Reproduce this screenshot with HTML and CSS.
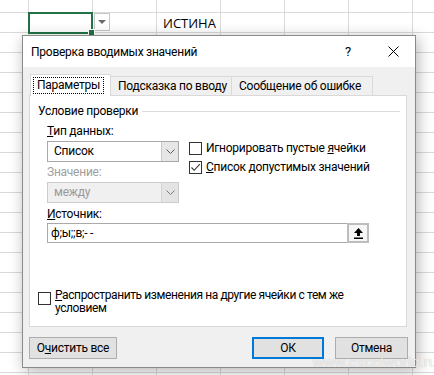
FILE: index.html
```html
<!DOCTYPE html>
<html lang="ru">
<head>
  <meta charset="UTF-8">
  <meta name="viewport" content="width=device-width, initial-scale=1.0">
  <title>Проверка вводимых значений</title>
  <link rel="stylesheet" href="styles.css">
</head>
<body>
  <div class="sheet">
    <div class="sheet-row">
      <div class="cell-active"><span class="fill-handle"></span></div>
      <div class="cell-dropdown"><span class="tri"></span></div>
      <div class="cell-value">ИСТИНА</div>
    </div>
  </div>

  <div class="dialog">
    <div class="titlebar">
      <div class="title">Проверка вводимых значений</div>
      <div class="title-btn help">?</div>
      <div class="title-btn close">
        <svg width="11" height="11" viewBox="0 0 11 11"><path d="M0.5 0.5 L10.5 10.5 M10.5 0.5 L0.5 10.5" stroke="#000" stroke-width="1"/></svg>
      </div>
    </div>

    <div class="dialog-body">
      <div class="tabs">
        <div class="tab active"><span class="focus">Параметры</span></div>
        <div class="tab tab-1">Подсказка по вводу</div>
        <div class="tab tab-2">Сообщение об ошибке</div>
      </div>

      <div class="pane">
        <div class="group-title"><span>Условие проверки</span></div>

        <div class="cond">
          <div class="col-left">
            <div class="label"><u>Т</u>ип данных:</div>
            <div class="select">
              <div class="select-value">Список</div>
              <div class="select-arrow">
                <svg width="9" height="5" viewBox="0 0 9 5"><path d="M0.5 0.5 L4.5 4.5 L8.5 0.5" fill="none" stroke="#5a5a5a"/></svg>
              </div>
            </div>
            <div class="label disabled">Значение:</div>
            <div class="select is-disabled">
              <div class="select-value">между</div>
              <div class="select-arrow">
                <svg width="9" height="5" viewBox="0 0 9 5"><path d="M0.5 0.5 L4.5 4.5 L8.5 0.5" fill="none" stroke="#7a7a7a"/></svg>
              </div>
            </div>
          </div>
          <div class="col-right">
            <div class="check-row">
              <span class="checkbox"></span>
              <span class="check-label">Игнорировать пустые <u>я</u>чейки</span>
            </div>
            <div class="check-row">
              <span class="checkbox">
                <svg width="11" height="11" viewBox="0 0 11 11"><path d="M1.5 5.5 L4.2 8.3 L9.8 2.2" fill="none" stroke="#333" stroke-width="1.1"/></svg>
              </span>
              <span class="check-label"><u>С</u>писок допустимых значений</span>
            </div>
          </div>
        </div>

        <div class="source">
          <div class="label"><u>И</u>сточник:</div>
          <div class="source-input">
            <div class="source-value">ф;ы;;в;- -</div>
            <div class="source-btn">
              <svg width="9" height="11" viewBox="0 0 9 11"><path d="M4.5 0 L9 5 H6 V8 H3 V5 H0 Z" fill="#000"/><rect x="0" y="9.5" width="9" height="1.5" fill="#000"/></svg>
            </div>
          </div>
        </div>

        <div class="spread">
          <span class="checkbox"></span>
          <div class="check-label spread-label">
            <div><u>Р</u>аспространить изменения на другие ячейки с тем же</div>
            <div>условием</div>
          </div>
        </div>
      </div>

      <div class="footer">
        <button class="btn">О<u>ч</u>истить все</button>
        <button class="btn btn-ok">ОК</button>
        <button class="btn btn-cancel">Отмена</button>
      </div>
    </div>
  </div>

  <div class="watermark">www.excelworld.ru</div>
</body>
</html>
```

FILE: styles.css
```css
body {
  margin: 0;
  width: 434px;
  height: 375px;
  overflow: hidden;
  position: relative;
  font-family: Roboto, "Noto Sans", sans-serif;
  font-size: 12px;
  letter-spacing: -0.25px;
  color: #000;
  background-color: #fff;
}

/* лист Excel */
.sheet {
  height: 375px;
  background-image:
    linear-gradient(to right, #dadada 1px, transparent 1px),
    linear-gradient(to bottom, #dadada 1px, transparent 1px);
  background-size: 64px 20px;
  background-position: 28px 12px;
}

.sheet-row {
  display: flex;
  padding-top: 12px;
  height: 21px;
}

.cell-active {
  position: relative;
  margin-left: 28px;
  width: 65px;
  height: 22px;
  box-sizing: border-box;
  border: 2px solid #217346;
  background-color: #fff;
}

.fill-handle {
  position: absolute;
  right: -4px;
  bottom: -4px;
  width: 5px;
  height: 5px;
  background-color: #217346;
  border: 1px solid #fff;
}

.cell-dropdown {
  margin: 1px 0 0 1px;
  width: 16px;
  height: 18px;
  box-sizing: border-box;
  border: 1px solid #c6c6c6;
  background-color: #fff;
  display: flex;
  justify-content: center;
  align-items: center;
}

.tri {
  width: 0;
  height: 0;
  border-left: 4px solid transparent;
  border-right: 4px solid transparent;
  border-top: 4px solid #6a6a6a;
}

.cell-value {
  margin-left: 53px;
  font-family: "Open Sans", sans-serif;
  font-size: 13px;
  letter-spacing: 0;
  line-height: 22px;
}

/* диалог */
.dialog {
  position: absolute;
  left: 22px;
  top: 35px;
  width: 394px;
  height: 333px;
  box-sizing: border-box;
  border: 1px solid #8a8a8a;
  background-color: #f0f0f0;
  box-shadow: 2px 3px 14px rgba(0, 0, 0, 0.3);
}

.titlebar {
  height: 31px;
  background-color: #fff;
  display: flex;
  align-items: center;
}

.title {
  flex: 1;
  padding-left: 8px;
  line-height: 16px;
}

.title-btn {
  height: 31px;
  display: flex;
  align-items: center;
  justify-content: center;
}

.help {
  width: 44px;
  font-size: 13px;
}

.close {
  width: 45px;
  padding-left: 2px;
  box-sizing: border-box;
}

.dialog-body {
  padding: 7px 7px 0 6px;
}

.tabs {
  display: flex;
  align-items: flex-end;
  height: 21px;
  padding-left: 1px;
}

.tab {
  box-sizing: border-box;
  border: 1px solid #d9d9d9;
  border-bottom: none;
  line-height: 16px;
  white-space: nowrap;
}

.tab.active {
  position: relative;
  z-index: 1;
  width: 81px;
  height: 22px;
  margin-bottom: -1px;
  padding: 2px 0 0 3px;
  background-color: #fff;
}

.focus {
  display: inline-block;
  padding: 0 3px;
  line-height: 15px;
  outline: 1px dotted #000;
}

.tab-1,
.tab-2 {
  height: 19px;
  padding: 1px 0 0 7px;
  border-left: none;
  background-color: #f0f0f0;
}

.tab-1 {
  width: 121px;
}

.tab-2 {
  width: 141px;
}

.pane {
  width: 378px;
  height: 232px;
  box-sizing: border-box;
  border: 1px solid #d9d9d9;
  background-color: #fff;
}

.group-title {
  display: flex;
  align-items: center;
  margin: 7px 6px 0 8px;
  line-height: 16px;
}

.group-title::after {
  content: "";
  flex: 1;
  height: 1px;
  margin: 1px 0 0 4px;
  background-color: #dcdcdc;
}

.cond {
  display: flex;
  margin: 4px 0 0 17px;
}

.col-left {
  width: 132px;
}

.label {
  line-height: 16px;
}

.label.disabled {
  color: #a0a0a0;
  margin-top: 2px;
}

.select {
  display: flex;
  height: 21px;
  margin-top: 2px;
  box-sizing: border-box;
  border: 1px solid #a9a9a9;
  background-color: #fff;
}

.select-value {
  flex: 1;
  padding-left: 6px;
  line-height: 19px;
}

.select-arrow {
  width: 16px;
  border-left: 1px solid #c8c8c8;
  background-color: #e6e6e6;
  display: flex;
  justify-content: center;
  align-items: center;
}

.select.is-disabled {
  border-color: #cccccc;
  background-color: #f0f0f0;
  color: #9a9a9a;
}

.select.is-disabled .select-arrow {
  border-left-color: #d4d4d4;
  background-color: #e4e4e4;
}

.col-right {
  margin: 18px 0 0 10px;
}

.check-row {
  display: flex;
  height: 19px;
}

.checkbox {
  width: 13px;
  height: 13px;
  margin-top: 1px;
  box-sizing: border-box;
  border: 1px solid #333;
  background-color: #fff;
  display: flex;
  justify-content: center;
  align-items: center;
  flex-shrink: 0;
}

.check-label {
  margin-left: 4px;
  line-height: 14px;
  white-space: nowrap;
}

.source {
  margin: 3px 0 0 17px;
}

.source-input {
  display: flex;
  width: 322px;
  height: 20px;
  margin-top: 1px;
  box-sizing: border-box;
  border: 1px solid #a9a9a9;
}

.source-value {
  flex: 1;
  padding-left: 3px;
  line-height: 18px;
}

.source-btn {
  width: 22px;
  margin: -1px -1px -1px 0;
  box-sizing: border-box;
  border: 2px solid #bdbdbd;
  background-color: #f6f6f6;
  display: flex;
  justify-content: center;
  align-items: center;
}

.spread {
  display: flex;
  margin: 46px 0 0 8px;
}

.spread .checkbox {
  margin-top: 3px;
}

.spread-label {
  line-height: 13px;
  letter-spacing: -0.4px;
}

.footer {
  display: flex;
  margin-top: 10px;
}

.btn {
  height: 22px;
  box-sizing: border-box;
  border: 1px solid #adadad;
  background-color: #e1e1e1;
  font-family: inherit;
  font-size: 12px;
  letter-spacing: -0.25px;
  line-height: 20px;
  color: #000;
  padding: 0;
  width: 88px;
}

.btn-ok {
  margin-left: auto;
  width: 72px;
  border: 2px solid #0078d7;
  line-height: 18px;
}

.btn-cancel {
  margin-left: 11px;
  width: 73px;
}

.watermark {
  position: absolute;
  left: 313px;
  top: 353px;
  font-family: "Liberation Sans", Arial, sans-serif;
  font-size: 15px;
  letter-spacing: 0;
  color: rgba(255, 255, 255, 0.75);
  text-shadow: 0 0 1px rgba(0, 0, 0, 0.25);
}
```
